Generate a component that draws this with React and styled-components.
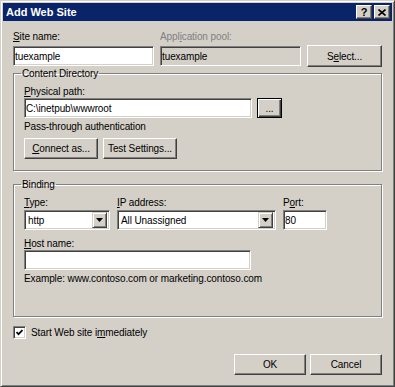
import React from "react"
import styled, { createGlobalStyle } from "styled-components"

const GlobalStyle = createGlobalStyle`
    html, body {
        margin: 0;
        padding: 0;
        background: #d4d0c8;
    }
    body {
        font-family: "Liberation Sans", Arial, sans-serif;
        font-size: 10px;
        letter-spacing: -0.1px;
        color: #000;
    }
`

const fonte = `
    font-family: "Liberation Sans", Arial, sans-serif;
    font-size: 10px;
    letter-spacing: -0.1px;
`

export default function App() {
    return (
        <>
            <GlobalStyle />
            <Janela>
                <BarraTitulo>
                    <span>Add Web Site</span>
                    <BotoesTitulo>
                        <BotaoTitulo>?</BotaoTitulo>
                        <BotaoTitulo>
                            <svg width="8" height="7" viewBox="0 0 8 7">
                                <path d="M0.5 0.5 L7.5 6.5 M7.5 0.5 L0.5 6.5" stroke="#000" strokeWidth="1.6" />
                            </svg>
                        </BotaoTitulo>
                    </BotoesTitulo>
                </BarraTitulo>
                <Corpo>
                    <LinhaSite>
                        <Rotulo><u>S</u>ite name:</Rotulo>
                        <Rotulo desativado>Appl<u>i</u>cation pool:</Rotulo>
                        <span />
                        <Campo readOnly value="tuexample" />
                        <Campo readOnly cinza value="tuexample" />
                        <Botao largura={75} altura={22}>S<u>e</u>lect...</Botao>
                    </LinhaSite>

                    <Grupo>
                        <Legenda>Content Directory</Legenda>
                        <Rotulo><u>P</u>hysical path:</Rotulo>
                        <LinhaCaminho>
                            <Campo readOnly value="C:\inetpub\wwwroot" largura={228} />
                            <Botao largura={25} altura={20} padrao>...</Botao>
                        </LinhaCaminho>
                        <Texto topo={2}>Pass-through authentication</Texto>
                        <LinhaBotoes>
                            <Botao largura={74} altura={21}><u>C</u>onnect as...</Botao>
                            <Botao largura={74} altura={21}>Test Settings...</Botao>
                        </LinhaBotoes>
                    </Grupo>

                    <Grupo topo={7} baixo={31}>
                        <Legenda>Binding</Legenda>
                        <GradeLigacao>
                            <Rotulo><u>T</u>ype:</Rotulo>
                            <Rotulo><u>I</u>P address:</Rotulo>
                            <Rotulo>P<u>o</u>rt:</Rotulo>
                            <Combo>
                                <span>http</span>
                                <SetaCombo>
                                    <svg width="7" height="4" viewBox="0 0 7 4"><path d="M0 0 H7 L3.5 4 Z" fill="#000" /></svg>
                                </SetaCombo>
                            </Combo>
                            <Combo>
                                <span>All Unassigned</span>
                                <SetaCombo>
                                    <svg width="7" height="4" viewBox="0 0 7 4"><path d="M0 0 H7 L3.5 4 Z" fill="#000" /></svg>
                                </SetaCombo>
                            </Combo>
                            <Campo readOnly value="80" />
                        </GradeLigacao>
                        <Rotulo topo={7}><u>H</u>ost name:</Rotulo>
                        <Campo readOnly value="" largura={227} />
                        <Texto topo={2}>Example: www.contoso.com or marketing.contoso.com</Texto>
                    </Grupo>

                    <LinhaMarcar>
                        <Caixa>
                            <svg width="7" height="7" viewBox="0 0 7 7">
                                <path d="M0.5 3 L2.5 5.2 L6.5 1" stroke="#000" strokeWidth="1.7" fill="none" />
                            </svg>
                        </Caixa>
                        <span>Start Web site i<u>m</u>mediately</span>
                    </LinhaMarcar>

                    <Rodape>
                        <Botao largura={72} altura={21}>OK</Botao>
                        <Botao largura={72} altura={21}>Cancel</Botao>
                    </Rodape>
                </Corpo>
            </Janela>
        </>
    )
}

const Janela = styled.div`
    width: 395px;
    height: 387px;
    box-sizing: border-box;
    background: #d4d0c8;
    border: 1px solid;
    border-color: #d4d0c8 #404040 #404040 #d4d0c8;
    box-shadow: inset 1px 1px 0 #fff, inset -1px -1px 0 #808080;
    padding: 2px;
    display: flex;
    flex-direction: column;
`

const BarraTitulo = styled.div`
    height: 18px;
    background: #0a246a;
    color: #fff;
    font-weight: bold;
    font-size: 11px;
    letter-spacing: 0;
    display: flex;
    align-items: center;
    padding: 0 2px 0 3px;
`

const BotoesTitulo = styled.div`
    margin-left: auto;
    display: flex;
    gap: 2px;
`

const BotaoTitulo = styled.div`
    width: 16px;
    height: 14px;
    box-sizing: border-box;
    background: #d4d0c8;
    border: 1px solid;
    border-color: #fff #404040 #404040 #fff;
    box-shadow: inset -1px -1px 0 #808080;
    color: #000;
    font-size: 11px;
    font-weight: bold;
    display: flex;
    justify-content: center;
    align-items: center;
`

const Corpo = styled.div`
    flex: 1;
    padding: 9px 10px 0 10px;
    display: flex;
    flex-direction: column;
`

const LinhaSite = styled.div`
    display: grid;
    grid-template-columns: 141px 141px 1fr;
    column-gap: 6px;
    row-gap: 2px;
    align-items: center;
`

const Rotulo = styled.div`
    line-height: 13px;
    margin-top: ${p => p.topo || 0}px;
    color: ${p => (p.desativado ? "#808080" : "#000")};
    white-space: nowrap;
`

const Texto = styled.div`
    line-height: 13px;
    margin-top: ${p => p.topo || 0}px;
    white-space: nowrap;
`

const Campo = styled.input`
    ${fonte}
    width: ${p => (p.largura ? p.largura + "px" : "100%")};
    height: 20px;
    box-sizing: border-box;
    margin: 0;
    padding: 0 1px;
    border: 1px solid;
    border-color: #808080 #fff #fff #808080;
    box-shadow: inset 1px 1px 0 #404040, inset -1px -1px 0 #d4d0c8;
    background: ${p => (p.cinza ? "#d4d0c8" : "#fff")};
    color: #000;
    outline: none;
`

const Botao = styled.button`
    ${fonte}
    width: ${p => p.largura}px;
    height: ${p => p.altura}px;
    box-sizing: border-box;
    margin: 0;
    padding: 0;
    white-space: nowrap;
    background: #d4d0c8;
    border: 1px solid;
    border-color: ${p => (p.padrao ? "#000" : "#fff #404040 #404040 #fff")};
    box-shadow: ${p =>
        p.padrao
            ? "inset 1px 1px 0 #fff, inset -1px -1px 0 #404040, inset -2px -2px 0 #808080"
            : "inset -1px -1px 0 #808080"};
    color: #000;
`

const Grupo = styled.fieldset`
    margin: ${p => p.topo || 0}px 0 0 0;
    padding: 5px 10px ${p => (p.baixo != null ? p.baixo : 11)}px 10px;
    border: 1px solid #808080;
    box-shadow: inset 1px 1px 0 #fff, 1px 1px 0 #fff;
    min-width: 0;
`

const Legenda = styled.legend`
    padding: 0 1px;
    margin-left: -3px;
    line-height: 13px;
`

const LinhaCaminho = styled.div`
    display: flex;
    align-items: center;
    gap: 5px;
`

const LinhaBotoes = styled.div`
    display: flex;
    gap: 5px;
    margin-top: 5px;
`

const GradeLigacao = styled.div`
    display: grid;
    grid-template-columns: 86px 159px 44px;
    column-gap: 7px;
    row-gap: 1px;
`

const Combo = styled.div`
    height: 20px;
    box-sizing: border-box;
    border: 1px solid;
    border-color: #808080 #fff #fff #808080;
    box-shadow: inset 1px 1px 0 #404040, inset -1px -1px 0 #d4d0c8;
    background: #fff;
    display: flex;
    align-items: center;
    padding: 2px 2px 2px 3px;

    span {
        flex: 1;
    }
`

const SetaCombo = styled.div`
    width: 15px;
    height: 16px;
    box-sizing: border-box;
    background: #d4d0c8;
    border: 1px solid;
    border-color: #d4d0c8 #404040 #404040 #d4d0c8;
    box-shadow: inset 1px 1px 0 #fff, inset -1px -1px 0 #808080;
    display: flex;
    justify-content: center;
    align-items: center;
`

const LinhaMarcar = styled.div`
    display: flex;
    align-items: center;
    gap: 5px;
    margin-top: 9px;
    line-height: 13px;
`

const Caixa = styled.div`
    width: 13px;
    height: 13px;
    box-sizing: border-box;
    border: 1px solid;
    border-color: #808080 #fff #fff #808080;
    box-shadow: inset 1px 1px 0 #404040, inset -1px -1px 0 #d4d0c8;
    background: #fff;
    display: flex;
    justify-content: center;
    align-items: center;
`

const Rodape = styled.div`
    display: flex;
    justify-content: flex-end;
    gap: 4px;
    margin-top: 15px;
`
